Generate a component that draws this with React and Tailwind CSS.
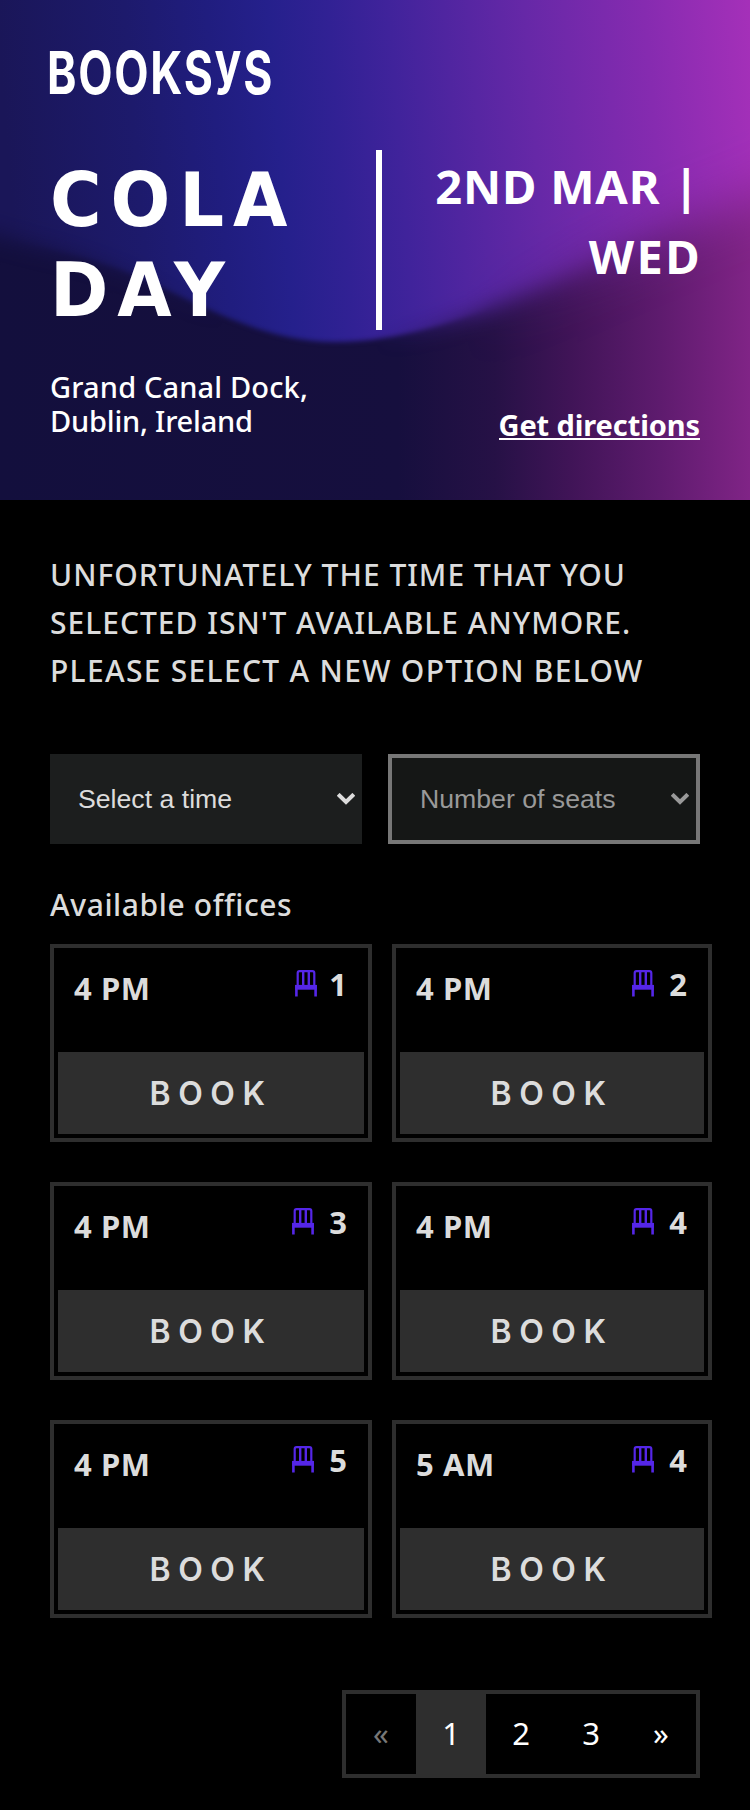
const SLOTS = [
  { time: "4 PM", seats: 1 },
  { time: "4 PM", seats: 2 },
  { time: "4 PM", seats: 3 },
  { time: "4 PM", seats: 4 },
  { time: "4 PM", seats: 5 },
  { time: "5 AM", seats: 4 },
];

const WAVE =
  "M-120 -120 H870 V140 C810 170 790 185 750 200 C690 222 640 245 600 262 C530 292 430 342 335 342 C250 342 180 290 110 266 C70 252 40 248 0 236 L-120 200 Z";

function HeroBackdrop() {
  return (
    <svg className="absolute inset-0 h-full w-full" viewBox="0 0 750 500" aria-hidden="true">
      <defs>
        <linearGradient id="base" gradientUnits="userSpaceOnUse" x1="0" y1="0" x2="750" y2="0">
          <stop offset="0" stopColor="#130f3d" />
          <stop offset="0.53" stopColor="#160f3e" />
          <stop offset="0.66" stopColor="#261146" />
          <stop offset="0.76" stopColor="#401457" />
          <stop offset="0.88" stopColor="#5e1b6e" />
          <stop offset="1" stopColor="#802486" />
        </linearGradient>
        <linearGradient id="glow" gradientUnits="userSpaceOnUse" x1="0" y1="60" x2="750" y2="0">
          <stop offset="0" stopColor="#1a1658" />
          <stop offset="0.17" stopColor="#1d1a6c" />
          <stop offset="0.28" stopColor="#201d7f" />
          <stop offset="0.36" stopColor="#25208c" />
          <stop offset="0.44" stopColor="#312194" />
          <stop offset="0.52" stopColor="#40239b" />
          <stop offset="0.7" stopColor="#6628a7" />
          <stop offset="0.86" stopColor="#862bb0" />
          <stop offset="1" stopColor="#a530b9" />
        </linearGradient>
        <filter id="crisp" filterUnits="userSpaceOnUse" x="-160" y="-160" width="1070" height="820">
          <feGaussianBlur stdDeviation="2.5" />
        </filter>
        <filter id="soft" filterUnits="userSpaceOnUse" x="-160" y="-160" width="1070" height="820">
          <feGaussianBlur stdDeviation="11" />
        </filter>
        <filter id="softer" filterUnits="userSpaceOnUse" x="-160" y="-160" width="1070" height="820">
          <feGaussianBlur stdDeviation="26" />
        </filter>
        <linearGradient id="toSoft" gradientUnits="userSpaceOnUse" x1="0" y1="0" x2="750" y2="0">
          <stop offset="0" stopColor="#000" />
          <stop offset="0.3" stopColor="#fff" />
          <stop offset="0.5" stopColor="#fff" />
          <stop offset="0.66" stopColor="#000" />
        </linearGradient>
        <linearGradient id="toSofter" gradientUnits="userSpaceOnUse" x1="0" y1="0" x2="750" y2="0">
          <stop offset="0.62" stopColor="#000" />
          <stop offset="0.92" stopColor="#fff" />
        </linearGradient>
        <mask id="wave" maskUnits="userSpaceOnUse" x="0" y="0" width="750" height="500">
          <path d={WAVE} fill="#fff" filter="url(#soft)" />
          <g mask="url(#crispZone)">
            <rect width="750" height="500" fill="#000" />
            <path d={WAVE} fill="#fff" filter="url(#crisp)" />
          </g>
          <g mask="url(#softerZone)">
            <rect width="750" height="500" fill="#000" />
            <path d={WAVE} fill="#fff" filter="url(#softer)" />
          </g>
        </mask>
        <mask id="crispZone" maskUnits="userSpaceOnUse" x="0" y="0" width="750" height="500">
          <rect width="750" height="500" fill="url(#toSoft)" />
        </mask>
        <mask id="softerZone" maskUnits="userSpaceOnUse" x="0" y="0" width="750" height="500">
          <rect width="750" height="500" fill="url(#toSofter)" />
        </mask>
      </defs>
      <rect width="750" height="500" fill="url(#base)" />
      <rect width="750" height="500" fill="url(#glow)" mask="url(#wave)" />
    </svg>
  );
}

function Logo() {
  return (
    <div className="h-[60px] w-[222px] pt-[3px] font-['Inter',sans-serif] text-[59px] leading-[60px] font-bold whitespace-nowrap text-white">
      <span className="-ml-[3px] inline-block origin-left scale-x-[0.755] tracking-[2.3px]">
        BOOKS<span className="relative -top-[11px]">y</span>S
      </span>
    </div>
  );
}

function Chevron() {
  return (
    <svg className="h-3 w-[18px]" viewBox="0 0 18 12" fill="none" aria-hidden="true">
      <path d="M1.2 1.3 9 9 16.8 1.3" stroke="currentColor" strokeWidth="4" />
    </svg>
  );
}

function Chair() {
  return (
    <svg className="h-[27px] w-[22px]" viewBox="0 0 22 27" fill="none" stroke="#5526e8" aria-hidden="true">
      <path d="M2.7 16V3Q2.7 1.2 4.5 1.2H17.5Q19.3 1.2 19.3 3V16" strokeWidth="2.2" />
      <path d="M8.2 1.5V16M13.8 1.5V16" strokeWidth="2.4" />
      <path d="M0.2 17.3H21.8" strokeWidth="4.8" />
      <path d="M1.4 15V26.4M20.6 15V26.4" strokeWidth="2.6" />
    </svg>
  );
}

function SlotCard({ time, seats }) {
  return (
    <article className="flex h-[198px] flex-col justify-between border-4 border-[#2e2e2e] p-1">
      <div className="flex justify-between pr-[17px] pl-4 font-['Noto_Sans',sans-serif] text-[31px] leading-10 font-bold text-[#dcdcdc]">
        <span className="pt-4 tracking-[0.6px]">{time}</span>
        <span className={`flex items-start pt-3 ${seats === 1 ? "gap-3" : "gap-[15px]"}`}>
          <span className="pt-1.5">
            <Chair />
          </span>
          <span>{seats}</span>
        </span>
      </div>
      <button className="h-[82px] bg-[#2e2e2e] pt-px font-['Inter',sans-serif] text-[32px] font-semibold tracking-[7.5px] text-[#dcdcdc]">
        BOOK
      </button>
    </article>
  );
}

export default function App() {
  return (
    <main className="h-[1810px] w-[750px] bg-black font-['Noto_Sans',sans-serif]">
      <header className="relative h-[500px] overflow-hidden">
        <HeroBackdrop />
        <div className="relative flex h-full flex-col pt-10 pr-[50px] pl-[50px] text-white">
          <Logo />
          <div className="mt-[50px] flex h-[180px] justify-between">
            <h1 className="w-[326px] origin-left scale-x-95 pt-[5px] font-['DejaVu_Sans',sans-serif] text-[74px] leading-[90px] font-bold tracking-[9.4px]">
              COLA
              <br />
              DAY
            </h1>
            <div className="w-1.5 bg-white" />
            <p className="flex-1 pt-px text-right text-[47px] leading-[70px] font-bold tracking-[0.8px] whitespace-nowrap">
              2ND MAR |<br />
              <span className="-mr-[2px] tracking-[2.4px]">WED</span>
            </p>
          </div>
          <div className="mt-[40px] flex justify-between">
            <p className="text-[29px] leading-[34px] font-medium">
              <span className="tracking-[0.15px]">Grand Canal Dock,</span>
              <br />
              <span className="tracking-[-0.2px]">Dublin, Ireland</span>
            </p>
            <a className="mt-[35px] h-[35px] border-b-2 border-white text-[29px] leading-10 font-bold tracking-[-0.1px]">
              Get directions
            </a>
          </div>
        </div>
      </header>

      <section className="px-[50px] pt-[51px] text-[#dcdcdc]">
        <p className="text-[30px] leading-[48px] font-medium tracking-[1px] whitespace-nowrap">
          UNFORTUNATELY THE TIME THAT YOU
          <br />
          SELECTED ISN'T AVAILABLE ANYMORE.
          <br />
          <span className="tracking-[1.3px]">PLEASE SELECT A NEW OPTION BELOW</span>
        </p>

        <div className="mt-[59px] flex justify-between font-['Liberation_Sans',sans-serif] text-[26.67px]">
          <button className="flex h-[90px] w-[312px] items-center justify-between bg-[#1c1e1e] pr-[7px] pl-7">
            Select a time
            <Chevron />
          </button>
          <button className="flex h-[90px] w-[312px] items-center justify-between border-4 border-[#777] bg-[#151716] pr-[7px] pl-7 text-[#999]">
            Number of seats
            <Chevron />
          </button>
        </div>

        <h2 className="mt-[41px] h-[59px] text-[30px] leading-10 font-medium tracking-[0.6px]">Available offices</h2>

        <div className="grid w-[662px] grid-cols-[322px_320px] gap-x-5 gap-y-10">
          {SLOTS.map((slot, i) => (
            <SlotCard key={i} {...slot} />
          ))}
        </div>

        <nav className="mt-[72px] flex justify-end">
          <div className="grid h-[88px] grid-cols-[repeat(5,70px)] items-stretch border-4 border-[#2e2e2e] text-[31px] text-white">
            <button className="pb-0.5 text-[#777]">«</button>
            <button className="bg-[#2e2e2e] pb-0.5">1</button>
            <button className="pb-0.5">2</button>
            <button className="pb-0.5">3</button>
            <button className="pb-0.5">»</button>
          </div>
        </nav>
      </section>
    </main>
  );
}
